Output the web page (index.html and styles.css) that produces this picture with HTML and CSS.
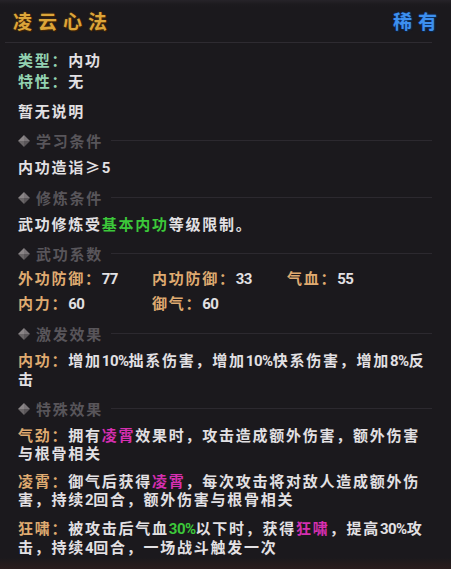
FILE: index.html
```html
<!DOCTYPE html>
<html lang="zh-CN">
<head>
<meta charset="utf-8">
<title>凌云心法</title>
<link rel="stylesheet" href="styles.css">
</head>
<body>
<div class="tooltip">
  <header class="head">
    <h1 class="name">凌云心法</h1>
    <span class="rarity">稀有</span>
  </header>
  <hr class="rule">

  <div class="body">
    <div class="info">
      <p><span class="key">类型：</span>内功</p>
      <p><span class="key">特性：</span>无</p>
    </div>
    <p class="desc">暂无说明</p>

    <h2 class="section"><svg class="gem" viewBox="0 0 12 12"><path d="M6 0 L12 6 L6 6 Z" fill="#7a7578"/><path d="M12 6 L6 12 L6 6 Z" fill="#5a5659"/><path d="M6 12 L0 6 L6 6 Z" fill="#6a6668"/><path d="M0 6 L6 0 L6 6 Z" fill="#8a8587"/></svg><span>学习条件</span></h2>
    <p>内功造诣≥<span class="num">5</span></p>

    <h2 class="section"><svg class="gem" viewBox="0 0 12 12"><path d="M6 0 L12 6 L6 6 Z" fill="#7a7578"/><path d="M12 6 L6 12 L6 6 Z" fill="#5a5659"/><path d="M6 12 L0 6 L6 6 Z" fill="#6a6668"/><path d="M0 6 L6 0 L6 6 Z" fill="#8a8587"/></svg><span>修炼条件</span></h2>
    <p>武功修炼受<span class="green">基本内功</span>等级限制。</p>

    <h2 class="section"><svg class="gem" viewBox="0 0 12 12"><path d="M6 0 L12 6 L6 6 Z" fill="#7a7578"/><path d="M12 6 L6 12 L6 6 Z" fill="#5a5659"/><path d="M6 12 L0 6 L6 6 Z" fill="#6a6668"/><path d="M0 6 L6 0 L6 6 Z" fill="#8a8587"/></svg><span>武功系数</span></h2>
    <div class="stats">
      <p><span class="tan">外功防御：</span><span class="num">77</span></p>
      <p><span class="tan">内功防御：</span><span class="num">33</span></p>
      <p><span class="tan">气血：</span><span class="num">55</span></p>
      <p><span class="tan">内力：</span><span class="num">60</span></p>
      <p><span class="tan">御气：</span><span class="num">60</span></p>
    </div>

    <h2 class="section"><svg class="gem" viewBox="0 0 12 12"><path d="M6 0 L12 6 L6 6 Z" fill="#7a7578"/><path d="M12 6 L6 12 L6 6 Z" fill="#5a5659"/><path d="M6 12 L0 6 L6 6 Z" fill="#6a6668"/><path d="M0 6 L6 0 L6 6 Z" fill="#8a8587"/></svg><span>激发效果</span></h2>
    <p><span class="tan">内功：</span>增加<span class="num">10%</span>拙系伤害，增加<span class="num">10%</span>快系伤害，增加<span class="num">8%</span>反击</p>

    <h2 class="section"><svg class="gem" viewBox="0 0 12 12"><path d="M6 0 L12 6 L6 6 Z" fill="#7a7578"/><path d="M12 6 L6 12 L6 6 Z" fill="#5a5659"/><path d="M6 12 L0 6 L6 6 Z" fill="#6a6668"/><path d="M0 6 L6 0 L6 6 Z" fill="#8a8587"/></svg><span>特殊效果</span></h2>
    <div class="effects">
      <p><span class="tan">气劲：</span>拥有<span class="pink">凌霄</span>效果时，攻击造成额外伤害，额外伤害与根骨相关</p>
      <p><span class="tan">凌霄：</span>御气后获得<span class="pink">凌霄</span>，每次攻击将对敌人造成额外伤害，持续<span class="num">2</span>回合，额外伤害与根骨相关</p>
      <p><span class="tan">狂啸：</span>被攻击后气血<span class="green num">30%</span>以下时，获得<span class="pink">狂啸</span>，提高<span class="num">30%</span>攻击，持续<span class="num">4</span>回合，一场战斗触发一次</p>
    </div>
  </div>
</div>
</body>
</html>
```

FILE: styles.css
```css
* {
  box-sizing: border-box;
}

html,
body {
  margin: 0;
  padding: 0;
  height: 100%;
  background: #1b191d;
}

.tooltip {
  width: 451px;
  height: 569px;
  overflow: hidden;
  background:
    linear-gradient(to bottom, #262329 0, #1d1b1f 4px, #1b191d 8px, #1b191d 558px, #221b1c 562px, #2a1d1d 569px);
  font-family: "Noto Sans CJK SC", "Noto Sans", sans-serif;
  font-size: 15px;
  font-weight: 700;
  letter-spacing: 1.75px;
  color: #e2e0e3;
}

p {
  margin: 0;
  line-height: 18px;
}

/* digits and percent signs use a narrower latin face, set tight */
.num {
  font-family: Roboto, "Liberation Sans", sans-serif;
  letter-spacing: -0.5px;
}

/* title bar */
.head {
  height: 42px;
  display: flex;
  align-items: center;
  justify-content: space-between;
  padding: 0 8px 0 13px;
}

.name,
.rarity {
  margin: 0;
  font-size: 19px;
  font-weight: 700;
  letter-spacing: 6px;
  line-height: 24px;
}

.name {
  color: #dca53a;
  text-shadow: 0 0 2px #6b3d0a, 1px 1px 1px #3a2006;
}

.rarity {
  color: #3d8fef;
  text-shadow: 0 0 2px #0f3f80, 1px 1px 1px #0a2444;
}

.rule {
  margin: 0 19px 0 5px;
  border: 0;
  height: 1px;
  background: #2e2b31;
}

/* content */
.body {
  padding: 6px 19px 0 18px;
}

.info p {
  line-height: 21px;
}

.key {
  color: #93d2b1;
}

.desc {
  margin-top: 11px;
}

.section {
  display: flex;
  align-items: center;
  margin: 10px 0 7px;
  height: 21px;
  font-size: 15px;
  font-weight: 700;
  color: #58555a;
}

.section::after {
  content: "";
  flex: 1;
  height: 1px;
  margin-left: 8px;
  background: #2c292f;
}

.gem {
  width: 12px;
  height: 12px;
  margin-right: 6px;
  flex: none;
}

.stats {
  display: grid;
  grid-template-columns: 134px 135px 1fr;
  row-gap: 6px;
  margin: -2px 0 7px;
}

.effects {
  display: flex;
  flex-direction: column;
  gap: 10px;
}

.tan {
  color: #dfaa70;
}

.green {
  color: #3cc83a;
}

.pink {
  color: #d52fb0;
}
```
